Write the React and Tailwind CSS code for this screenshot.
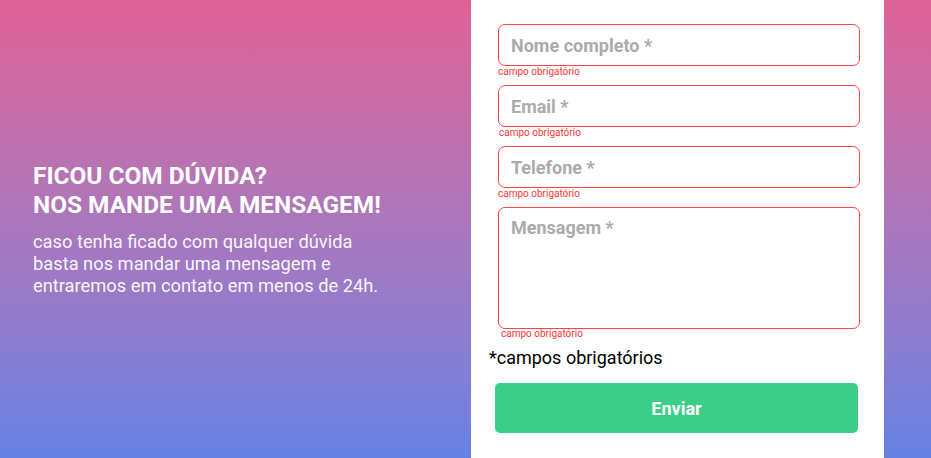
import { useState } from "react";

const Field = ({ placeholder, multiline, errorClass = "" }) => {
  const [value, setValue] = useState("");
  const base =
    "w-full border-[1.5px] border-[#ff4545] rounded-[7px] bg-white pl-3 text-[18px] font-bold text-gray-700 outline-none placeholder:text-[#ababab] placeholder:font-bold";
  return (
    <div className="flex flex-col">
      {multiline ? (
        <textarea
          value={value}
          onChange={(e) => setValue(e.target.value)}
          placeholder={placeholder}
          className={`${base} h-[122px] pt-[7px] resize-none leading-[26px]`}
        />
      ) : (
        <input
          value={value}
          onChange={(e) => setValue(e.target.value)}
          placeholder={placeholder}
          className={`${base} h-[42px]`}
        />
      )}
      <span className={`text-[10px] leading-[12px] text-[#ff3535] h-[19px] ${errorClass}`}>campo obrigatório</span>
    </div>
  );
};

export default function App() {
  return (
    <div
      className="w-full h-[458px] flex bg-gradient-to-b from-[#df6195] to-[#6681e3]"
      style={{ fontFamily: "Roboto, 'Liberation Sans', sans-serif" }}
    >
      <div className="w-[471px] flex flex-col justify-center pl-[33px] text-white">
        <h2 className="text-[24.4px] leading-[29px] font-bold">
          FICOU COM DÚVIDA?
          <br />
          NOS MANDE UMA MENSAGEM!
        </h2>
        <p className="mt-[12px] text-[18.3px] leading-[22px] text-white/95">
          caso tenha ficado com qualquer dúvida
          <br />
          basta nos mandar uma mensagem e
          <br />
          entraremos em contato em menos de 24h.
        </p>
      </div>

      <div className="w-[413px] bg-white pt-[24px] pl-[27px] pr-[24px]">
        <form className="flex flex-col" onSubmit={(e) => e.preventDefault()}>
          <Field placeholder="Nome completo *" />
          <Field placeholder="Email *" errorClass="pl-[1px]" />
          <Field placeholder="Telefone *" />
          <Field placeholder="Mensagem *" multiline errorClass="pl-[3px] -mt-[1px]" />
          <p className="-ml-[9px] -mt-[1px] text-[18px] leading-[24px] text-black">*campos obrigatórios</p>
          <button
            type="submit"
            className="-ml-[3px] mt-[13px] w-[363px] h-[50px] rounded-[5px] bg-[#3ccd88] text-white text-[18px] font-bold"
          >
            Enviar
          </button>
        </form>
      </div>

      <div className="flex-1" />
    </div>
  );
}
